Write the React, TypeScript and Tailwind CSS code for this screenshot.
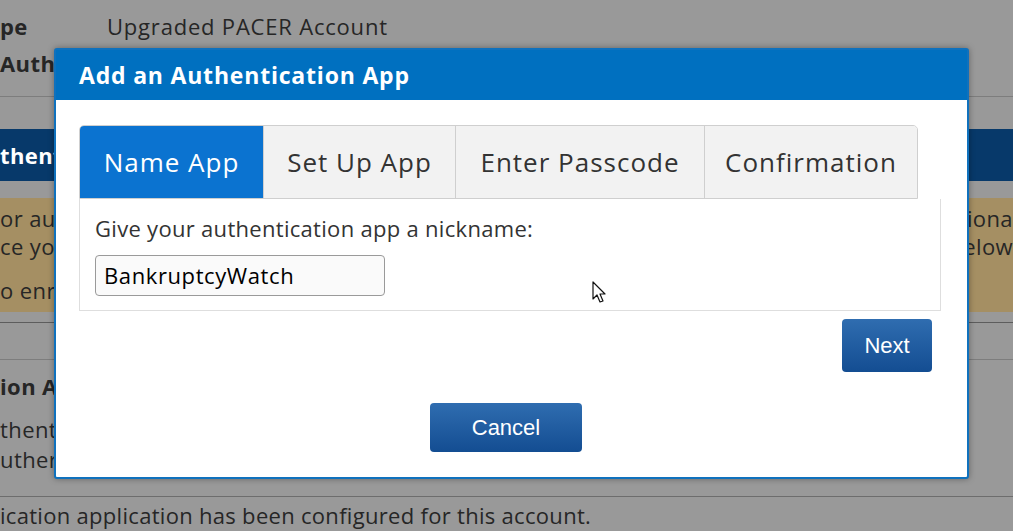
import React from "react";

const font = { fontFamily: "'Open Sans', 'Noto Sans', sans-serif" };

function Cursor() {
  return (
    <svg
      className="absolute left-[592px] top-[281px]"
      width="16"
      height="24"
      viewBox="0 0 16 24"
    >
      <path
        d="M1 1 L1 18 L5 14 L8 21 L11 20 L8 13 L13 13 Z"
        fill="#ffffff"
        stroke="#111111"
        strokeWidth="1.2"
        strokeLinejoin="round"
      />
    </svg>
  );
}

export default function App() {
  return (
    <div
      className="relative w-[1013px] h-[531px] overflow-hidden bg-[#999999] text-[#262626] text-[22px] tracking-[0.4px]"
      style={font}
    >
      {/* background page */}
      <div className="flex flex-col">
        <div className="h-[52px] flex items-center">
          <span className="font-bold w-[107px]">pe</span>
          <span className="tracking-[0.8px]">Upgraded PACER Account</span>
        </div>
        <div className="h-[22px] flex items-center font-bold">Auth</div>
        <div className="h-[22px]" />
        <div className="h-px bg-[#7d7d7d]" />
        <div className="h-[32px]" />
        <div className="h-[52px] bg-[#07396a] flex items-center text-white font-bold">
          thent
        </div>
        <div className="h-[17px]" />
        <div className="h-[114px] bg-[#a58f63] flex flex-col leading-[28px] pt-[6px]">
          <div className="flex justify-between">
            <span>or aut</span>
            <span>tiona</span>
          </div>
          <div className="flex justify-between">
            <span>ce you</span>
            <span>elow</span>
          </div>
          <div className="mt-[16px]">o enro</div>
        </div>
        <div className="h-[10px]" />
        <div className="h-px bg-[#5d5d5d]" />
        <div className="h-[36px]" />
        <div className="h-px bg-[#7d7d7d]" />
        <div className="h-[12px]" />
        <div className="font-bold leading-[28px]">ion A</div>
        <div className="leading-[30px] mt-[14px]">thent</div>
        <div className="leading-[30px]">uther</div>
        <div className="h-[22px]" />
        <div className="h-px bg-[#6d6d6d]" />
        <div className="leading-[28px] mt-[4px] tracking-[0.3px] whitespace-nowrap">
          ication application has been configured for this account.
        </div>
      </div>

      {/* modal */}
      <div className="absolute left-[54px] top-[48px] w-[915px] h-[431px] bg-white border-2 border-[#0f71bd] rounded-[3px] flex flex-col shadow-[0_0_6px_rgba(0,0,0,0.35)]">
        <div className="h-[50px] bg-[#0070c0] flex items-center pl-[23px] text-white font-bold text-[23px] tracking-[0.8px]">
          Add an Authentication App
        </div>
        <div className="flex flex-col pl-[23px] pr-[26px] pt-[25px]">
          <div className="flex w-[839px] h-[74px] border border-[#cfcfcf] rounded-t-[5px] overflow-hidden text-[26px] tracking-[1px] whitespace-nowrap">
            <div className="w-[183px] shrink-0 flex items-center justify-center bg-[#0b73d0] text-white">
              Name App
            </div>
            <div className="w-[192px] shrink-0 flex items-center justify-center bg-[#f2f2f2] text-[#333] border-l border-[#cfcfcf]">
              Set Up App
            </div>
            <div className="w-[249px] shrink-0 flex items-center justify-center bg-[#f2f2f2] text-[#333] border-l border-[#cfcfcf]">
              Enter Passcode
            </div>
            <div className="flex-1 flex items-center justify-center bg-[#f2f2f2] text-[#333] border-l border-[#cfcfcf]">
              Confirmation
            </div>
          </div>
          <div className="h-[112px] border border-[#dedede] border-t-0 flex flex-col pl-[15px] pt-[14px] text-[#333] tracking-[0.3px]">
            <div className="leading-[30px]">Give your authentication app a nickname:</div>
            <div className="mt-[12px] w-[290px] h-[41px] border border-[#9a9a9a] rounded-[4px] bg-[#fafafa] flex items-center pl-[8px] text-black tracking-[0.6px]">
              BankruptcyWatch
            </div>
          </div>
          <div className="flex justify-end pr-[9px] mt-[8px]">
            <button
              className="w-[90px] h-[53px] rounded-[4px] text-white text-[22px] tracking-normal bg-gradient-to-b from-[#2f6db0] to-[#134d92]"
              style={{ fontFamily: "'Liberation Sans', Arial, sans-serif" }}
            >
              Next
            </button>
          </div>
          <div className="flex justify-center mt-[31px] pr-[8px]">
            <button
              className="w-[152px] h-[49px] rounded-[4px] text-white text-[22px] tracking-normal bg-gradient-to-b from-[#2f6db0] to-[#134d92]"
              style={{ fontFamily: "'Liberation Sans', Arial, sans-serif" }}
            >
              Cancel
            </button>
          </div>
        </div>
      </div>

      <Cursor />
    </div>
  );
}
